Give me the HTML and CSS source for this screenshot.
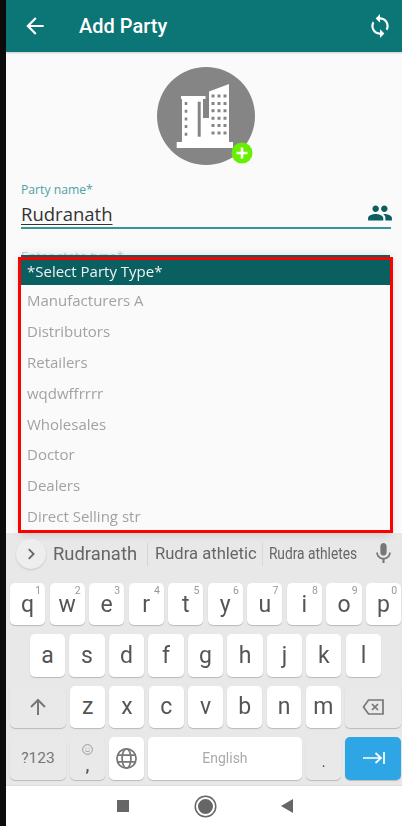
FILE: index.html
```html
<!DOCTYPE html>
<html lang="en">
<head>
    <meta charset="UTF-8">
    <meta name="viewport" content="width=device-width, initial-scale=1.0">
    <title>Add Party</title>
    <link rel="stylesheet" href="styles.css">
</head>
<body>
    <div class="screen">
        <header class="app-bar">
            <svg class="bar-icon" viewBox="0 0 24 24"><path d="M20 11H7.83l5.59-5.59L12 4l-8 8 8 8 1.41-1.41L7.83 13H20v-2z"/></svg>
            <h1>Add Party</h1>
            <svg class="bar-icon sync" viewBox="0 0 24 24"><path d="M12 4V1L8 5l4 4V6c3.31 0 6 2.69 6 6 0 1.01-.25 1.97-.7 2.8l1.46 1.46C19.54 15.03 20 13.57 20 12c0-4.42-3.58-8-8-8zm0 14c-3.31 0-6-2.69-6-6 0-1.01.25-1.97.7-2.8L5.24 7.74C4.46 8.97 4 10.43 4 12c0 4.42 3.58 8 8 8v3l4-4-4-4v3z"/></svg>
        </header>

        <main class="form">
            <svg class="avatar" viewBox="0 0 108 98">
                <circle cx="49" cy="49" r="49" fill="#858585"/>
                <g fill="#fff">
                    <rect x="19.7" y="75" width="56.3" height="6"/>
                    <rect x="24" y="29" width="24.5" height="3"/>
                    <rect x="25" y="32" width="21" height="43"/>
                    <path d="M52 24.5 72 17V75H46V51H52z"/>
                </g>
                <g fill="none" stroke="#858585" stroke-width="3">
                    <path d="M42.2 34.7v35"/>
                    <path d="M29 35v36" stroke-width="2.6" stroke-dasharray="3 4.7"/>
                    <path d="M56 27.5v42M62 27.5v42M68 27.5v42" stroke-dasharray="3 4.4"/>
                </g>
                <circle cx="85" cy="86" r="10.5" fill="#66f000"/>
                <path d="M85 80.5v11M79.5 86h11" stroke="#fff" stroke-width="2.6"/>
            </svg>

            <label class="field-label">Party name*</label>
            <div class="field">
                <span class="field-value">Rudranath</span>
                <svg class="field-icon" viewBox="0 0 24 24"><path d="M16 11c1.66 0 2.99-1.34 2.99-3S17.66 5 16 5c-1.66 0-3 1.34-3 3s1.34 3 3 3zm-8 0c1.66 0 2.99-1.34 2.99-3S9.66 5 8 5C6.34 5 5 6.34 5 8s1.34 3 3 3zm0 2c-2.33 0-7 1.17-7 3.5V19h14v-2.5c0-2.33-4.67-3.5-7-3.5zm8 0c-.29 0-.62.02-.97.05 1.16.84 1.97 1.97 1.97 3.45V19h6v-2.5c0-2.33-4.67-3.5-7-3.5z"/></svg>
            </div>
            <div class="hint">Enter state type*</div>

            <!-- dropdown sits over the rest of the form -->
            <div class="dropdown">
                <div class="option selected">*Select Party Type*</div>
                <div class="option">Manufacturers A</div>
                <div class="option">Distributors</div>
                <div class="option">Retailers</div>
                <div class="option">wqdwffrrrr</div>
                <div class="option">Wholesales</div>
                <div class="option">Doctor</div>
                <div class="option">Dealers</div>
                <div class="option">Direct Selling str</div>
            </div>
            <div class="highlight"></div>
        </main>

        <section class="keyboard">
            <div class="suggestions">
                <div class="chevron">
                    <svg viewBox="0 0 24 24"><path d="M9 5.5 15.5 12 9 18.5" fill="none" stroke="#666" stroke-width="2.4"/></svg>
                </div>
                <span class="word first">Rudranath</span>
                <span class="word second">Rudra athletic</span>
                <span class="word third">Rudra athletes</span>
                <svg class="mic" viewBox="0 0 24 24"><path d="M12 14c1.66 0 2.99-1.34 2.99-3L15 5c0-1.66-1.34-3-3-3S9 3.34 9 5v6c0 1.66 1.34 3 3 3zm5.3-3c0 3-2.54 5.1-5.3 5.1S6.7 14 6.7 11H5c0 3.41 2.72 6.23 6 6.72V21h2v-3.28c3.28-.48 6-3.3 6-6.72h-1.7z"/></svg>
            </div>

            <div class="key-row">
                <div class="key">q<sup>1</sup></div>
                <div class="key">w<sup>2</sup></div>
                <div class="key">e<sup>3</sup></div>
                <div class="key">r<sup>4</sup></div>
                <div class="key">t<sup>5</sup></div>
                <div class="key">y<sup>6</sup></div>
                <div class="key">u<sup>7</sup></div>
                <div class="key">i<sup>8</sup></div>
                <div class="key">o<sup>9</sup></div>
                <div class="key">p<sup>0</sup></div>
            </div>
            <div class="key-row inset">
                <div class="key">a</div>
                <div class="key">s</div>
                <div class="key">d</div>
                <div class="key">f</div>
                <div class="key">g</div>
                <div class="key">h</div>
                <div class="key">j</div>
                <div class="key">k</div>
                <div class="key">l</div>
            </div>
            <div class="key-row">
                <div class="key wide grey">
                    <svg class="key-icon" viewBox="0 0 24 24"><path d="M12 20V5M5 12l7-7 7 7" fill="none" stroke="#777" stroke-width="2"/></svg>
                </div>
                <div class="key">z</div>
                <div class="key">x</div>
                <div class="key">c</div>
                <div class="key">v</div>
                <div class="key">b</div>
                <div class="key">n</div>
                <div class="key">m</div>
                <div class="key wide grey">
                    <svg class="key-icon" viewBox="0 0 24 24"><path d="M22 5v14H7.5L2.5 12l5-7z" fill="none" stroke="#777" stroke-width="1.7"/><path d="M11 9l6 6M17 9l-6 6" fill="none" stroke="#777" stroke-width="1.7"/></svg>
                </div>
            </div>
            <div class="key-row bottom">
                <div class="key wide grey symbols">?123</div>
                <div class="key grey emoji">
                    <svg viewBox="0 0 24 24" fill="none" stroke="#888" stroke-width="1.5"><circle cx="12" cy="12" r="9"/><path d="M8 14c1 2.4 7 2.4 8 0"/><path d="M9 9v1.5M15 9v1.5"/></svg>
                    <span>,</span>
                </div>
                <div class="key">
                    <svg class="globe" viewBox="0 0 24 24" fill="none" stroke="#777" stroke-width="1.8"><circle cx="12" cy="12" r="10"/><ellipse cx="12" cy="12" rx="4.6" ry="10"/><path d="M2.8 8.5h18.4M2.8 15.5h18.4"/></svg>
                </div>
                <div class="key space">English</div>
                <div class="key grey dot">.</div>
                <div class="key wide enter">
                    <svg class="key-icon" viewBox="0 0 24 24"><path d="M2 12h18M14.5 7l5.5 5-5.5 5M23 6v12" fill="none" stroke="#fff" stroke-width="1.7"/></svg>
                </div>
            </div>
        </section>

        <nav class="nav-bar">
            <span class="nav-square"></span>
            <span class="nav-circle"></span>
            <span class="nav-back"></span>
        </nav>
    </div>
</body>
</html>
```

FILE: styles.css
```css
* {
    margin: 0;
    padding: 0;
    box-sizing: border-box;
}

body {
    background: #0c0c0c;
    font-family: "Open Sans", sans-serif;
    height: 826px;
    overflow: hidden;
}

/* the reference is a slightly soft capture */
.screen {
    margin-left: 6px;
    height: 826px;
    display: flex;
    flex-direction: column;
    background: #fafafa;
    filter: blur(0.35px);
}

.app-bar {
    height: 52px;
    flex-shrink: 0;
    background: #0c7575;
    display: flex;
    align-items: center;
    padding: 0 9px 1px 16px;
    box-shadow: 0 1px 2px rgba(0, 0, 0, 0.2);
    color: #fff;
}

.app-bar h1 {
    font-family: Roboto, sans-serif;
    font-size: 20px;
    font-weight: 500;
    margin-left: 31px;
    flex-grow: 1;
}

.bar-icon {
    width: 26px;
    height: 26px;
    fill: #fff;
}

.form {
    flex-grow: 1;
    position: relative;
    padding: 15px 0 0 15px;
}

.avatar {
    display: block;
    width: 108px;
    height: 98px;
    margin-left: 136px;
}

.field-label {
    display: block;
    margin-top: 16px;
    font-size: 12.2px;
    line-height: 17px;
    color: #4fa3a3;
}

.field {
    width: 370px;
    height: 31px;
    padding-top: 1px;
    border-bottom: 2px solid #379595;
    display: flex;
    align-items: center;
    justify-content: space-between;
}

.field-value {
    font-size: 18.5px;
    color: #333;
    text-decoration: underline;
    text-decoration-thickness: 1px;
    text-underline-offset: 3px;
}

.field-icon {
    width: 26px;
    height: 26px;
    fill: #0a6060;
    margin-right: -2px;
}

.hint {
    margin-top: 18px;
    font-size: 13px;
    color: #ccc;
}

.dropdown {
    position: absolute;
    left: 15px;
    top: 203px;
    width: 369px;
    background: #fafafa;
    box-shadow: 0 2px 10px rgba(0, 0, 0, 0.18);
}

.option {
    height: 30.8px;
    padding-left: 6px;
    display: flex;
    align-items: center;
    font-size: 15px;
    color: #a2a2a2;
}

.option.selected {
    height: 30px;
    padding-top: 1px;
    background: #0a6060;
    color: #f2f2f2;
}

.highlight {
    position: absolute;
    left: 12px;
    top: 205px;
    width: 375px;
    height: 276px;
    border: 3px solid #f00;
}

.keyboard {
    height: 253px;
    flex-shrink: 0;
    background: #e8e8e8;
    padding-left: 4px;
    padding-right: 1px;
    border-bottom: 1px solid #ddd;
}

.suggestions {
    height: 50px;
    padding-bottom: 8px;
    display: flex;
    align-items: center;
    position: relative;
    font-family: Roboto, sans-serif;
    color: #666;
}

.chevron {
    width: 30px;
    height: 30px;
    border-radius: 50%;
    background: #eee;
    box-shadow: 0 1px 2px rgba(0, 0, 0, 0.15);
    margin-left: 6px;
    padding: 6px;
}

.word {
    height: 24px;
    line-height: 24px;
    white-space: nowrap;
}

.word.first {
    font-size: 18.4px;
    margin-left: 7px;
    width: 94px;
}

.word.second {
    font-size: 16.6px;
    width: 115px;
    padding-left: 7px;
    border-left: 1px solid #d6d6d6;
}

.word.third {
    font-size: 16px;
    padding-left: 7px;
    border-left: 1px solid #d6d6d6;
    transform-origin: left;
    transform: scaleX(0.86);
}

.mic {
    position: absolute;
    right: 5px;
    top: 8px;
    width: 25px;
    height: 25px;
    fill: #777;
}

.key-row {
    display: flex;
    gap: 4.4px;
    margin-bottom: 9px;
}

.key-row.inset {
    padding: 0 20px;
}

.key-row.bottom {
    margin-bottom: 0;
}

.key {
    flex: 1 1 0;
    min-width: 0;
    height: 42.3px;
    position: relative;
    display: flex;
    align-items: center;
    justify-content: center;
    background: #fff;
    border-radius: 5px;
    box-shadow: 0 1px 1px rgba(0, 0, 0, 0.2);
    font-family: Roboto, sans-serif;
    font-size: 23px;
    color: #555;
}

.key sup {
    position: absolute;
    top: 2px;
    right: 4px;
    font-size: 10.5px;
    line-height: 12px;
    color: #999;
}

.key.wide {
    flex: 0 0 55.8px;
}

.key.grey {
    background: #e9e9e9;
}

.key.enter {
    background: #2ea6e6;
}

.key.space {
    flex: 0 0 154px;
    font-size: 14px;
    color: #aaa;
}

.key.symbols {
    font-size: 15.5px;
    color: #777;
}

.key.dot {
    align-items: flex-end;
    padding-bottom: 9px;
    font-size: 16px;
}

.key.emoji {
    flex-direction: column;
    font-size: 16px;
    font-weight: 700;
}

.key.emoji svg {
    width: 13px;
    height: 13px;
    margin-bottom: 2px;
}

.key.emoji span {
    line-height: 16px;
}

.key-row.bottom .key {
    height: 43px;
}

.key-icon {
    width: 24px;
    height: 24px;
}

.globe {
    width: 23px;
    height: 23px;
}

.nav-bar {
    height: 40px;
    flex-shrink: 0;
    background: #fff;
    display: flex;
    align-items: center;
    padding-left: 111px;
}

.nav-square {
    width: 12px;
    height: 12px;
    background: #666;
}

.nav-circle {
    width: 19px;
    height: 19px;
    margin-left: 67px;
    border-radius: 50%;
    background: #666;
    border: 2px solid #fff;
    box-shadow: 0 0 0 1.5px #666;
}

.nav-back {
    margin-left: 66px;
    width: 0;
    height: 0;
    border-style: solid;
    border-width: 7px 12px 7px 0;
    border-color: transparent #666 transparent transparent;
}
```
